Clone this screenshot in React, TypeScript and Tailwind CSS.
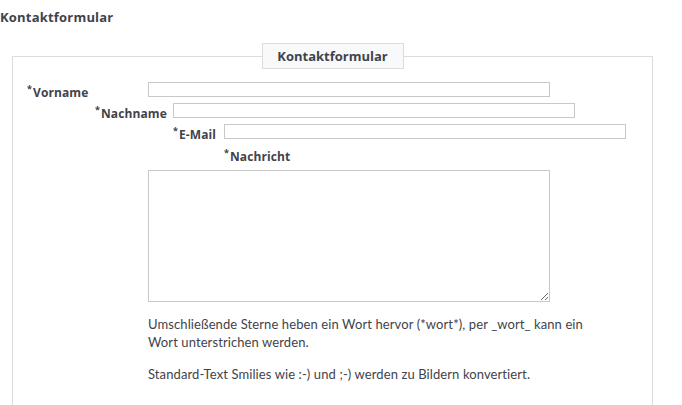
import React from "react";

const Req = () => (
  <span className="relative top-[-5px] text-[9px] leading-none mr-[1px]">*</span>
);

const bold = "font-['Open_Sans','Liberation_Sans',sans-serif] font-bold text-[13px] leading-[16px]";
const label = "font-['Open_Sans','Liberation_Sans',sans-serif] font-bold text-[12px] leading-[16px] tracking-[0.1px] whitespace-nowrap";

export default function App() {
  return (
    <div className="w-[682px] h-[405px] overflow-hidden bg-white text-[#41434b] font-['Lato','Liberation_Sans',sans-serif]">
      <div className={`pt-[9px] ${bold} tracking-[0.2px]`}>Kontaktformular</div>
      <fieldset className="mt-[18px] ml-[12px] w-[641px] h-[400px] border border-[#dcdcdc] p-0 m-0">
        <legend className={`mx-auto w-[142px] h-[26px] border border-[#dcdcdc] bg-[#f8f9fa] !leading-[24px] text-center p-0 ${bold}`}>
          Kontaktformular
        </legend>
        <div className="pt-[13px]">
          <div className="flex h-[21px]">
            <div className={`w-[135px] pl-[14px] pt-[3px] ${label}`}>
              <Req />Vorname
            </div>
            <input type="text" className="w-[402px] h-[15px] border border-[#c8c8c8] bg-white" />
          </div>
          <div className="flex h-[21px]">
            <div className={`w-[160px] pl-[82px] pt-[3px] ${label}`}>
              <Req />Nachname
            </div>
            <input type="text" className="w-[402px] h-[15px] border border-[#c8c8c8] bg-white" />
          </div>
          <div className="flex h-[21px]">
            <div className={`w-[211px] pl-[160px] pt-[3px] ${label}`}>
              <Req />E-Mail
            </div>
            <input type="text" className="w-[402px] h-[15px] border border-[#c8c8c8] bg-white" />
          </div>
          <div className={`h-[25px] pl-[211px] pt-[4px] ${label}`}>
            <Req />Nachricht
          </div>
          <div className="ml-[135px]">
            <textarea className="block w-[402px] h-[132px] border border-[#c8c8c8] bg-white" />
            <div className="w-[450px] mt-[13px] text-[13px] leading-[18px] tracking-[0.1px]">
              <p>Umschließende Sterne heben ein Wort hervor (*wort*), per _wort_ kann ein Wort unterstrichen werden.</p>
              <p className="mt-[14px]">Standard-Text Smilies wie :-) und ;-) werden zu Bildern konvertiert.</p>
            </div>
          </div>
        </div>
      </fieldset>
    </div>
  );
}
